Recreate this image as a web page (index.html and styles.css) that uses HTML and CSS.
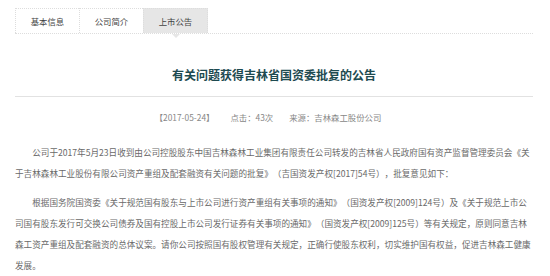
FILE: index.html
```html
<!DOCTYPE html>
<html>
<head>
    <title>上市公告</title>
    <link rel="stylesheet" href="styles.css">
</head>
<body>
    <div class="page">
        <!-- tab bar -->
        <div class="tabs">
            <a class="tab">基本信息</a>
            <a class="tab">公司简介</a>
            <a class="tab active">上市公告</a>
        </div>

        <!-- article -->
        <div class="article">
            <h1 class="title">有关问题获得吉林省国资委批复的公告</h1>
            <div class="meta">
                <span>【2017-05-24】</span>
                <span>点击：43次</span>
                <span>来源：吉林森工股份公司</span>
            </div>
            <div class="content">
                <p>公司于2017年5月23日收到由公司控股股东中国吉林森林工业集团有限责任公司转发的吉林省人民政府国有资产监督管理委员会《关于吉林森林工业股份有限公司资产重组及配套融资有关问题的批复》（吉国资发产权[2017]54号），批复意见如下：</p>
                <p>根据国务院国资委《关于规范国有股东与上市公司进行资产重组有关事项的通知》（国资发产权[2009]124号）及《关于规范上市公司国有股东发行可交换公司债券及国有控股上市公司发行证券有关事项的通知》（国资发产权[2009]125号）等有关规定，原则同意吉林森工资产重组及配套融资的总体议案。请你公司按照国有股权管理有关规定，正确行使股东权利，切实维护国有权益，促进吉林森工健康发展。</p>
            </div>
        </div>
    </div>
</body>
</html>
```

FILE: styles.css
```css
:root {
    --title-color: #1d4a50;
    --text-color: #6a6a6a;
    --muted-color: #888888;
    --line-color: #dddddd;
    --tab-active: #e6e6e6;
}

body {
    margin: 0;
    background: #ffffff;
    font-family: "Noto Sans CJK SC", "Noto Sans", sans-serif;
    color: var(--text-color);
    text-spacing-trim: space-all;
}

.page {
    padding: 8px 15px 0 15px;
}

.tabs {
    display: flex;
    border-bottom: 1px dotted var(--line-color);
    margin-right: 2px;
}

.tab {
    position: relative;
    width: 63px;
    height: 24px;
    line-height: 24px;
    text-align: center;
    font-size: 8.4px;
    color: #444;
    border-top: 1px dotted var(--line-color);
    border-left: 1px dotted var(--line-color);
}

.tab.active {
    background: var(--tab-active);
    border-right: 1px dotted var(--line-color);
}

/* little pointer under the active tab */
.tab.active::after {
    content: "";
    position: absolute;
    left: 50%;
    bottom: -5px;
    margin-left: -4px;
    border-left: 4px solid transparent;
    border-right: 4px solid transparent;
    border-top: 4px solid var(--tab-active);
}

.title {
    margin: 31px 2px 0 0;
    padding-bottom: 11px;
    border-bottom: 1px solid #e2e2e2;
    font-size: 12px;
    line-height: 20px;
    font-weight: bold;
    text-align: center;
    color: var(--title-color);
}

.meta {
    display: flex;
    justify-content: center;
    gap: 16px;
    margin-top: 10px;
    font-size: 8.4px;
    line-height: 20px;
    color: var(--muted-color);
    padding-right: 14px;
}

.content {
    margin-top: 15px;
    font-size: 8.6px;
    line-height: 21px;
}

.content p {
    margin: 0 0 8px;
    text-indent: 2em;
}
```
